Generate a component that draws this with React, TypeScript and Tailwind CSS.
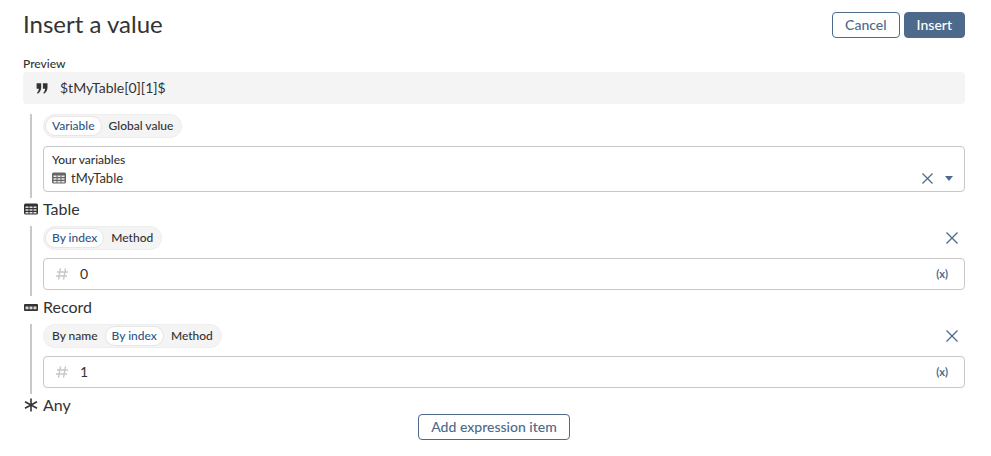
import React, { useState } from 'react';
import clsx from 'clsx';

type IconProps = { className?: string };

const QuoteIcon = ({ className }: IconProps) => (
  <svg viewBox="0 0 12 11" className={className} fill="currentColor" aria-hidden="true">
    <path d="M0.6 0.3h4.600v4.300c0 2.600-1.200 4.800-3.400 6.100l-0.800-0.700c1.100-1.200 1.700-2.600 1.800-4.200H0.600z" />
    <path d="M6.900 0.300h4.600v4.300c0 2.600-1.200 4.800-3.400 6.100l-0.800-0.700c1.100-1.200 1.700-2.600 1.800-4.200H6.900z" />
  </svg>
);

const TableIcon = ({ className }: IconProps) => (
  <svg viewBox="0 0 14 12" className={className} aria-hidden="true">
    <rect y="0.500" width="14" height="11" rx="1.500" fill="currentColor" />
    <path
      d="M1.500 3.500h3v1.500h-3zM5.500 3.500h3v1.500h-3zM9.500 3.500h3v1.500h-3zM1.500 6.200h3v1.500h-3zM5.500 6.200h3v1.500h-3zM9.500 6.200h3v1.500h-3zM1.500 8.900h3v1.500h-3zM5.500 8.900h3v1.500h-3zM9.500 8.900h3v1.500h-3z"
      fill="#fff"
      fillOpacity="0.85"
    />
  </svg>
);

const RecordIcon = ({ className }: IconProps) => (
  <svg viewBox="0 0 14 7" className={className} aria-hidden="true">
    <rect width="14" height="7" rx="1" fill="currentColor" />
    <path d="M1.500 2.500h3v2.800h-3zM5.500 2.500h3v2.800h-3zM9.500 2.500h3v2.800h-3z" fill="#fff" fillOpacity="0.800" />
  </svg>
);

const AnyIcon = ({ className }: IconProps) => (
  <svg viewBox="0 0 14 14" className={className} stroke="currentColor" strokeWidth="1.600" aria-hidden="true">
    <path d="M7 0.500v13M1 3.800l12 6.400M13 3.800L1 10.200" />
  </svg>
);

const HashIcon = ({ className }: IconProps) => (
  <svg viewBox="0 0 12 12" className={className} stroke="currentColor" strokeWidth="1.400" fill="none" aria-hidden="true">
    <path d="M4.500 0.300L2.500 11.700M9.500 0.300L7.500 11.700M1 4h11M0 8h11" />
  </svg>
);

const CloseIcon = ({ className }: IconProps) => (
  <svg viewBox="0 0 12 12" className={className} stroke="currentColor" strokeWidth="1.300" aria-hidden="true">
    <path d="M0.500 0.500l11 11M11.500 0.500l-11 11" />
  </svg>
);

const CaretIcon = ({ className }: IconProps) => (
  <svg viewBox="0 0 8 5" className={className} fill="currentColor" aria-hidden="true">
    <path d="M0 0h8L4 5z" />
  </svg>
);

interface SegmentedProps {
  name: string;
  options: string[];
  initial: string;
}

const Segmented: React.FC<SegmentedProps> = ({ name, options, initial }) => {
  const [selected, setSelected] = useState(initial);

  return (
    <div role="radiogroup" aria-label={name} className="flex h-6 items-center rounded-full border border-[#eeeeee] bg-[#f4f4f4] px-px">
      {options.map((option) => (
        <label
          key={option}
          className={clsx(
            'relative flex h-5 cursor-pointer items-center rounded-full border px-1.5 text-xs font-medium',
            option === selected ? 'border-[#e6e6e6] bg-white text-[#2f5686]' : 'border-transparent'
          )}
        >
          <input
            type="radio"
            name={name}
            value={option}
            checked={option === selected}
            onChange={() => setSelected(option)}
            className="sr-only"
          />
          {option}
        </label>
      ))}
    </div>
  );
};

interface StepProps {
  icon: React.ReactNode;
  type: string;
  children: React.ReactNode;
}

const Step: React.FC<StepProps> = ({ icon, type, children }) => (
  <section>
    <div className="ml-[7px] flex flex-col gap-2 border-l-2 border-[#c8c8c8] pb-1.5 pl-[11px]">{children}</div>
    <TypeLabel icon={icon} type={type} />
  </section>
);

const TypeLabel: React.FC<{ icon: React.ReactNode; type: string }> = ({ icon, type }) => (
  <h2 className="mb-1.5 flex h-[22px] items-center text-base">
    <span className="flex w-5 items-center pl-px">{icon}</span>
    {type}
  </h2>
);

interface IndexFieldProps {
  name: string;
  options: string[];
  value: string;
}

const IndexField: React.FC<IndexFieldProps> = ({ name, options, value }) => {
  const [index, setIndex] = useState(value);

  return (
    <>
      <div className="flex items-center justify-between">
        <Segmented name={name} options={options} initial="By index" />
        <button type="button" aria-label="Remove item" className="mr-[7px] text-[#4d6a8b]">
          <CloseIcon className="size-3" />
        </button>
      </div>
      <div className="flex h-8 items-center rounded border border-[#c8c8c8] px-3">
        <HashIcon className="size-3 text-[#c8c8c8]" />
        <input
          aria-label={name}
          value={index}
          onChange={(event) => setIndex(event.target.value)}
          className="ml-3 min-w-0 flex-1 text-sm outline-none"
        />
        <button type="button" aria-label="Use an expression" className="mr-1 text-[11px] font-bold text-[#4d6a8b]">
          (x)
        </button>
      </div>
    </>
  );
};

export default function App() {
  const [variable, setVariable] = useState('tMyTable');

  return (
    <main className="min-h-screen bg-white pt-3 pr-[26px] pb-4 pl-[23px] font-['Lato',sans-serif] text-[#333333]">
      <header className="flex items-start justify-between">
        <h1 className="text-2xl leading-6">Insert a value</h1>
        <div className="flex gap-1 text-sm font-medium">
          <button type="button" className="h-[26px] rounded border border-[#4d6a8b] px-3 leading-none text-[#4d6a8b]">
            Cancel
          </button>
          <button type="button" className="h-[26px] rounded border border-[#4d6a8b] bg-[#4d6a8b] px-3 leading-none text-white">
            Insert
          </button>
        </div>
      </header>

      {/* Preview */}
      <div className="mt-[18px] text-xs font-medium">Preview</div>
      <div className="mb-2.5 flex h-8 items-center gap-3 rounded bg-[#f4f4f4] px-[13px] text-sm">
        <QuoteIcon className="w-3" />
        <output>{`$${variable}[0][1]$`}</output>
      </div>

      {/* Expression items */}
      <Step icon={<TableIcon className="w-3.5" />} type="Table">
        <div className="flex">
          <Segmented name="Source" options={['Variable', 'Global value']} initial="Variable" />
        </div>
        <div className="flex h-[46px] flex-col justify-center rounded border border-[#c8c8c8] px-2">
          <label htmlFor="variable" className="text-xs leading-[18px] font-medium">
            Your variables
          </label>
          <div className="flex h-[18px] items-center">
            <TableIcon className="w-3.5 text-[#666666]" />
            <select
              id="variable"
              value={variable}
              onChange={(event) => setVariable(event.target.value)}
              className="ml-[5px] flex-1 appearance-none text-[13px] leading-[18px] outline-none"
            >
              <option>tMyTable</option>
            </select>
            <button type="button" aria-label="Clear" className="text-[#4d6a8b]">
              <CloseIcon className="size-[11px]" />
            </button>
            <CaretIcon className="mr-[3px] ml-3 w-2 text-[#4d6a8b]" />
          </div>
        </div>
      </Step>

      <Step icon={<RecordIcon className="w-3.5" />} type="Record">
        <IndexField name="Row" options={['By index', 'Method']} value="0" />
      </Step>

      <Step icon={<AnyIcon className="w-3.5" />} type="Any">
        <IndexField name="Column" options={['By name', 'By index', 'Method']} value="1" />
      </Step>

      <div className="-mt-2 flex justify-center">
        <button type="button" className="h-[26px] rounded border border-[#4d6a8b] px-3 text-sm leading-none font-medium text-[#4d6a8b]">
          Add expression item
        </button>
      </div>
    </main>
  );
}
